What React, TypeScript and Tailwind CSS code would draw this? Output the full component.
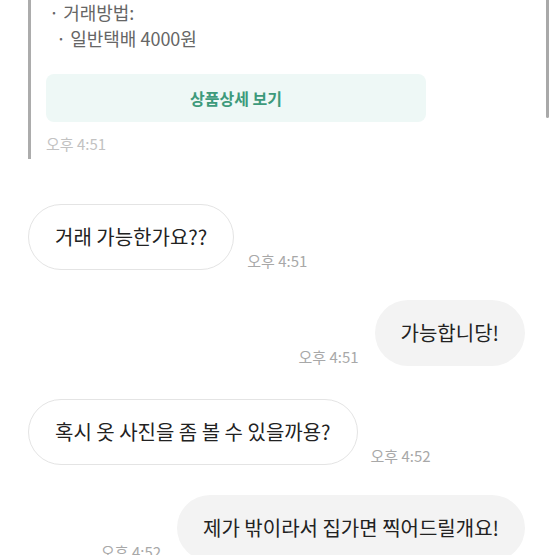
import React from "react";

function Theirs({ text, time, mt }: { text: string; time: string; mt: string }) {
  return (
    <div className={`flex items-end gap-[13px] ${mt}`}>
      <div className="h-[66px] rounded-full border border-[#e4e4e4] bg-white px-[26px] flex items-center text-[20px] text-[#222] whitespace-nowrap">
        {text}
      </div>
      <div className="mb-[1px] text-[15px] leading-[16px] text-[#a8a8a8] whitespace-nowrap">{time}</div>
    </div>
  );
}

function Mine({ text, time, mt }: { text: string; time: string; mt: string }) {
  return (
    <div className={`flex items-end justify-end gap-[16px] ${mt}`}>
      <div className="mb-[1px] text-[15px] leading-[16px] text-[#a8a8a8] whitespace-nowrap">{time}</div>
      <div className="h-[66px] rounded-full bg-[#f3f3f3] px-[26px] flex items-center text-[20px] text-[#222] whitespace-nowrap">
        {text}
      </div>
    </div>
  );
}

export default function App() {
  return (
    <div className="relative w-[555px] h-[555px] overflow-hidden bg-white font-['Noto_Sans_CJK_KR','Noto_Sans',sans-serif]">
      <div className="absolute right-[6px] top-0 h-[118px] w-[3px] rounded-b-full bg-[#a9a9a9]" />
      <div className="ml-[28px] h-[160px] border-l-[3px] border-[#acacac] pl-[15px]">
        <div className="-mt-[1px] text-[18px] leading-[26px] text-[#666]">
          <div className="pl-[3px]">· 거래방법:</div>
          <div className="pl-[10px]">· 일반택배 4000원</div>
        </div>
        <div className="mt-[23px] flex h-[48px] w-[380px] items-center justify-center rounded-[8px] bg-[#eef8f6] text-[16px] font-bold text-[#3d9a7b]">
          상품상세 보기
        </div>
        <div className="mt-[12px] text-[15px] leading-[20px] text-[#c2c2c2]">오후 4:51</div>
      </div>
      <div className="px-[28px] pr-[30px]">
        <Theirs text="거래 가능한가요??" time="오후 4:51" mt="mt-[45px]" />
        <Mine text="가능합니당!" time="오후 4:51" mt="mt-[30px]" />
        <Theirs text="혹시 옷 사진을 좀 볼 수 있을까용?" time="오후 4:52" mt="mt-[33px]" />
        <Mine text="제가 밖이라서 집가면 찍어드릴개요!" time="오후 4:52" mt="mt-[30px]" />
      </div>
    </div>
  );
}
